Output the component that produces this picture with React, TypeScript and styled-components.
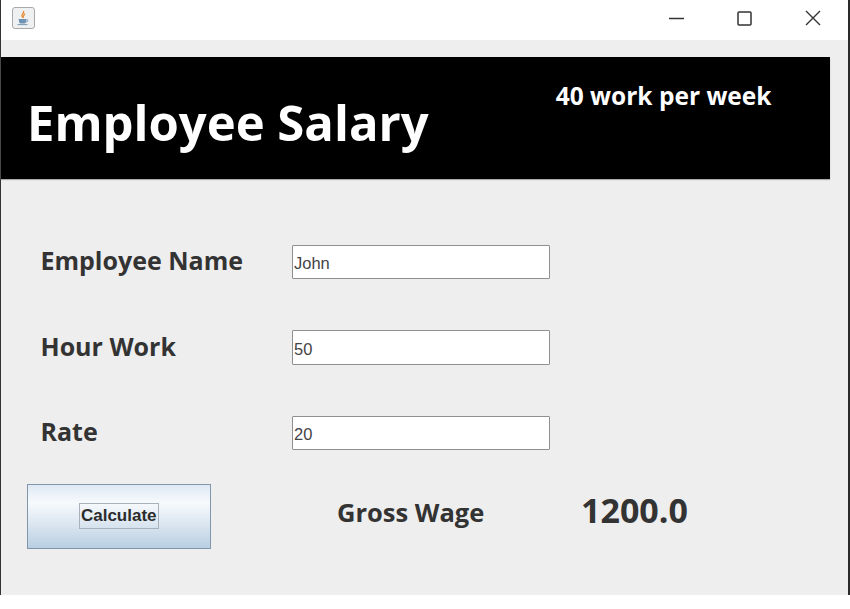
import React from "react";
import styled, { createGlobalStyle } from "styled-components";

const Global = createGlobalStyle`
  html, body { margin: 0; padding: 0; background: #fff; }
  body { width: 850px; height: 609px; overflow: hidden; font-family: "Open Sans", "Noto Sans", sans-serif; }
`;

const Frame = styled.div`
  box-sizing: border-box;
  width: 850px;
  height: 595px;
  display: flex;
  flex-direction: column;
  border-left: 1.5px solid #333;
  border-right: 2.5px solid #2a2a2a;
`;

const TitleBar = styled.div`
  box-sizing: border-box;
  height: 40px;
  flex: none;
  display: flex;
  align-items: center;
  justify-content: space-between;
  background: #fff;
  padding: 0 27px 4px 10.5px;
`;

const AppIcon = styled.div`
  width: 23px;
  height: 22px;
  box-sizing: border-box;
  border: 1.5px solid #a9a9a9;
  border-radius: 3px;
  background: #eef0f2;
  display: flex;
  align-items: center;
  justify-content: center;
`;

const WindowControls = styled.div`
  display: flex;
  align-items: center;
  gap: 53px;
`;

const Body = styled.div`
  flex: 1;
  background: #eeeeee;
  padding-top: 17px;
  display: flex;
  flex-direction: column;
`;

const Banner = styled.div`
  width: 828.5px;
  height: 121.5px;
  background: #000;
  color: #fff;
  display: flex;
  justify-content: space-between;
  box-shadow: 0 1px 1px #aaa;
`;

const Title = styled.h1`
  margin: 34px 0 0 26px;
  font-size: 49px;
  line-height: 62px;
  font-weight: 700;
  letter-spacing: 0;
`;

const Note = styled.div`
  margin: 22px 58px 0 0;
  font-size: 24.5px;
  line-height: 34px;
  font-weight: 700;
`;

const Form = styled.div`
  padding: 66px 0 0 39.5px;
  display: flex;
  flex-direction: column;
  gap: 50.5px;
`;

const Row = styled.div`
  display: flex;
  align-items: center;
  height: 35px;
`;

const FieldLabel = styled.label`
  width: 251px;
  font-size: 25px;
  line-height: 32px;
  font-weight: 700;
  color: #333;
  margin-top: -4px;
`;

const Field = styled.input`
  box-sizing: border-box;
  width: 258px;
  height: 34.5px;
  padding: 3px 0 0 1.5px;
  margin: 0;
  border: 1.5px solid #8f8f8f;
  border-radius: 1px;
  background: #fff;
  color: #444;
  font-family: "Liberation Sans", Arial, sans-serif;
  font-size: 16.5px;
  outline: none;
`;

const Footer = styled.div`
  margin-top: 33px;
  padding-left: 25.5px;
  display: flex;
  align-items: center;
`;

const CalcButton = styled.button`
  box-sizing: border-box;
  width: 184.5px;
  height: 65px;
  padding: 0;
  margin: 0;
  border: 1.5px solid #8096ad;
  background: linear-gradient(180deg, #dfe9f3 0%, #f7fafd 28%, #dbe6f0 62%, #b9cfe2 100%);
  display: flex;
  align-items: center;
  justify-content: center;
`;

const CalcText = styled.span`
  border: 1px solid #a9b1ba;
  padding: 0 1px;
  height: 24px;
  line-height: 24px;
  font-family: "Liberation Sans", Arial, sans-serif;
  font-weight: 700;
  font-size: 17px;
  color: #2c2c2c;
`;

const WageLabel = styled.div`
  margin: -8px 0 0 126px;
  width: 244px;
  font-size: 25.5px;
  line-height: 34px;
  font-weight: 700;
  color: #333;
`;

const WageValue = styled.div`
  font-size: 34px;
  line-height: 44px;
  font-weight: 700;
  color: #333;
  margin-top: -12px;
`;

export default function App() {
  return (
    <>
      <Global />
      <Frame>
        <TitleBar>
          <AppIcon>
            <svg width="16" height="16" viewBox="0 0 16 16" fill="none">
              <path d="M8.5 1c1 2-2 3-1.500 5 .2.8 1 1.200 1 1.200C7.600 6 10 5 9.500 3.500" stroke="#e8872c" strokeWidth="1.300" />
              <path d="M3.500 9h8l-.8 3.500a1.500 1.500 0 0 1-1.500 1H5.800a1.500 1.500 0 0 1-1.500-1z" fill="#6f93b5" />
              <path d="M11.300 9.800c2-.5 2.500 1.800-.6 2.400" stroke="#6f93b5" />
              <path d="M2.500 14.600h10" stroke="#7d98b0" />
            </svg>
          </AppIcon>
          <WindowControls>
            <svg width="15" height="15" viewBox="0 0 15 15">
              <path d="M0 7.500h15" stroke="#333" strokeWidth="1.500" />
            </svg>
            <svg width="15" height="15" viewBox="0 0 15 15" fill="none">
              <rect x="1" y="1" width="13" height="13" rx="1" stroke="#333" strokeWidth="1.500" />
            </svg>
            <svg width="16" height="16" viewBox="0 0 16 16">
              <path d="M1 1l14 14M15 1L1 15" stroke="#333" strokeWidth="1.400" />
            </svg>
          </WindowControls>
        </TitleBar>
        <Body>
          <Banner>
            <Title>Employee Salary</Title>
            <Note>40 work per week</Note>
          </Banner>
          <Form>
            <Row>
              <FieldLabel>Employee Name</FieldLabel>
              <Field defaultValue="John" />
            </Row>
            <Row>
              <FieldLabel>Hour Work</FieldLabel>
              <Field defaultValue="50" />
            </Row>
            <Row>
              <FieldLabel>Rate</FieldLabel>
              <Field defaultValue="20" />
            </Row>
          </Form>
          <Footer>
            <CalcButton>
              <CalcText>Calculate</CalcText>
            </CalcButton>
            <WageLabel>Gross Wage</WageLabel>
            <WageValue>1200.0</WageValue>
          </Footer>
        </Body>
      </Frame>
    </>
  );
}
